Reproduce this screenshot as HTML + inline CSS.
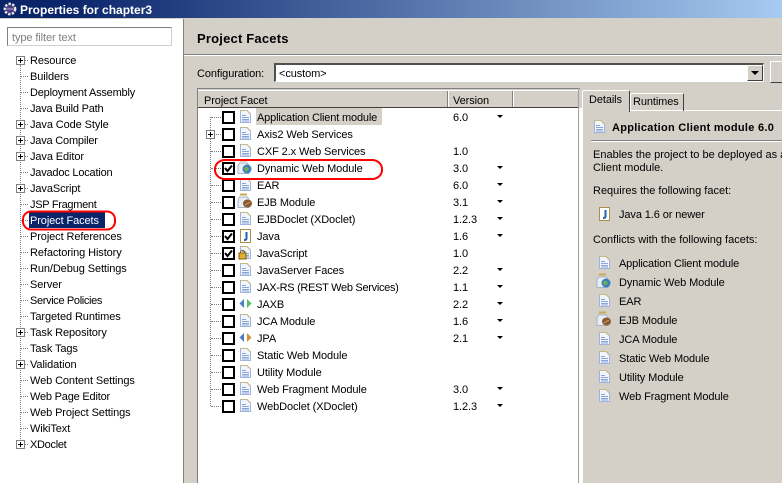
<!DOCTYPE html>
<html><head><meta charset="utf-8"><style>
html,body{margin:0;padding:0}
body{width:782px;height:483px;overflow:hidden;position:relative;background:#d4d0c8;font:11px/18px "Liberation Sans",sans-serif;color:#000;letter-spacing:-.1px}
div,span{position:absolute;white-space:nowrap}
svg{position:absolute;overflow:visible}
.t{left:30px}
.f{left:257px}
.v{left:453px}
.c{left:619px}
.hl{background:#808080;height:1px}
.h{height:0;width:8px;left:20px;border-top:1px dotted #808080}
.h2{height:0;width:10px;left:211px;border-top:1px dotted #808080}
.p{left:16px;width:7px;height:7px;border:1px solid #808080;background:#fff}
.p:before{content:"";position:absolute;left:1px;top:3px;width:5px;height:1px;background:#000}
.p:after{content:"";position:absolute;left:3px;top:1px;width:1px;height:5px;background:#000}
.b{left:222px;width:9px;height:9px;border:2px solid #000;background:#fff}
.a{left:497px;width:0;height:0;border-left:3px solid transparent;border-right:3px solid transparent;border-top:3px solid #000}
.w{letter-spacing:0}
</style></head><body>
<svg width="0" height="0" style="position:absolute"><defs>
<g id="pg"><path d="M.5.5H7L10.5 4V12.5H.5Z" fill="#f2f5fb" stroke="#9fb4dc"/><path d="M.5.5H7L10.5 4" fill="none" stroke="#c8b880"/><path d="M2 5.5H6M2 7.5H9M2 9.5H9M2 11H9" stroke="#86a4d8"/></g>
<g id="jar"><path d="M2 .5H9" stroke="#c8a850" stroke-width="2"/><path d="M1.5 3H9.5L11 6V13.5H0V6Z" fill="#e8eef6" stroke="#a8b4c8"/></g>
</defs></svg>

<!-- title bar -->
<div style="left:0;top:0;width:782px;height:18px;background:linear-gradient(90deg,#0a246a 0%,#0a246a 8%,#a6caf0 100%)"></div>
<svg style="left:2px;top:1px" width="16" height="16"><circle cx="8" cy="8" r="5.2" fill="#4a3f80" stroke="#e8e8e8" stroke-width="2.4" stroke-dasharray="2.4 1.4"/><path d="M4.5 8H11.5" stroke="#b0a8d0"/></svg>
<div class="w" style="left:20px;top:1px;color:#fff;font-weight:bold;font-size:12px">Properties for chapter3</div>

<!-- left panel -->
<div style="left:0;top:19px;width:183px;height:464px;background:#fff"></div>
<div style="left:183px;top:19px;width:1px;height:464px;background:#808080"></div>
<div style="left:7px;top:27px;width:163px;height:17px;background:#fff;border:1px solid;border-color:#808080 #d4d0c8 #d4d0c8 #808080"></div>
<div style="left:12px;top:29px;color:#808080">type filter text</div>
<div style="left:20px;top:65px;width:0;height:380px;border-left:1px dotted #808080"></div>
<div class="h" style="top:60px"></div><div class="h" style="top:76px"></div><div class="h" style="top:92px"></div><div class="h" style="top:108px"></div><div class="h" style="top:124px"></div><div class="h" style="top:140px"></div><div class="h" style="top:156px"></div><div class="h" style="top:172px"></div><div class="h" style="top:188px"></div><div class="h" style="top:204px"></div><div class="h" style="top:220px"></div><div class="h" style="top:236px"></div><div class="h" style="top:252px"></div><div class="h" style="top:268px"></div><div class="h" style="top:284px"></div><div class="h" style="top:300px"></div><div class="h" style="top:316px"></div><div class="h" style="top:332px"></div><div class="h" style="top:348px"></div><div class="h" style="top:364px"></div><div class="h" style="top:380px"></div><div class="h" style="top:396px"></div><div class="h" style="top:412px"></div><div class="h" style="top:428px"></div><div class="h" style="top:444px"></div>
<div class="p" style="top:56px"></div><div class="p" style="top:120px"></div><div class="p" style="top:136px"></div><div class="p" style="top:152px"></div><div class="p" style="top:184px"></div><div class="p" style="top:328px"></div><div class="p" style="top:360px"></div><div class="p" style="top:440px"></div>
<div style="left:29px;top:212px;width:76px;height:16px;background:#0a246a"></div>
<div class="t" style="top:52px">Resource</div>
<div class="t" style="top:68px">Builders</div>
<div class="t" style="top:84px;letter-spacing:-.2px">Deployment Assembly</div>
<div class="t" style="top:100px;letter-spacing:-.2px">Java Build Path</div>
<div class="t" style="top:116px">Java Code Style</div>
<div class="t" style="top:132px;letter-spacing:-.2px">Java Compiler</div>
<div class="t" style="top:148px">Java Editor</div>
<div class="t" style="top:164px;letter-spacing:-.2px">Javadoc Location</div>
<div class="t" style="top:180px">JavaScript</div>
<div class="t" style="top:196px;letter-spacing:-.3px">JSP Fragment</div>
<div class="t" style="top:212px;color:#fff">Project Facets</div>
<div class="t" style="top:228px">Project References</div>
<div class="t" style="top:244px">Refactoring History</div>
<div class="t" style="top:260px">Run/Debug Settings</div>
<div class="t" style="top:276px">Server</div>
<div class="t" style="top:292px;letter-spacing:-.35px">Service Policies</div>
<div class="t" style="top:308px">Targeted Runtimes</div>
<div class="t" style="top:324px">Task Repository</div>
<div class="t" style="top:340px">Task Tags</div>
<div class="t" style="top:356px">Validation</div>
<div class="t" style="top:372px">Web Content Settings</div>
<div class="t" style="top:388px;letter-spacing:-.2px">Web Page Editor</div>
<div class="t" style="top:404px">Web Project Settings</div>
<div class="t" style="top:420px">WikiText</div>
<div class="t" style="top:436px;letter-spacing:-.3px">XDoclet</div>

<!-- header -->
<div style="left:197px;top:30px;font-weight:bold;font-size:13px;letter-spacing:.2px">Project Facets</div>
<div class="hl" style="left:184px;top:54px;width:598px"></div>
<div style="left:184px;top:55px;width:598px;height:1px;background:#fff"></div>
<div style="left:197px;top:65px">Configuration:</div>
<div style="left:274px;top:63px;width:487px;height:16px;background:#fff;border:2px solid;border-color:#505050 #fff #fff #505050;border-width:2px 1px 1px 2px"></div>
<div style="left:279px;top:65px">&lt;custom&gt;</div>
<div style="left:747px;top:65px;width:14px;height:14px;background:#d4d0c8;border:1px solid;border-color:#fff #404040 #404040 #fff"></div>
<div style="left:751px;top:71px;width:0;height:0;border-left:4px solid transparent;border-right:4px solid transparent;border-top:4px solid #000"></div>
<div style="left:770px;top:61px;width:14px;height:20px;background:#d4d0c8;border:1px solid;border-color:#fff #404040 #404040 #fff"></div>

<!-- table -->
<div style="left:198px;top:90px;width:380px;height:393px;background:#fff"></div>
<div style="left:197px;top:88px;width:383px;height:1px;background:#808080"></div>
<div style="left:197px;top:88px;width:1px;height:395px;background:#808080"></div>
<div style="left:578px;top:88px;width:1px;height:395px;background:#a0a0a0"></div>
<div style="left:579px;top:108px;width:3px;height:375px;background:#fff"></div>
<div style="left:198px;top:90px;width:380px;height:17px;background:#d4d0c8;border-top:1px solid #fff"></div>
<div style="left:198px;top:107px;width:380px;height:1px;background:#404040"></div>
<div style="left:447px;top:91px;width:1px;height:16px;background:#808080"></div>
<div style="left:448px;top:91px;width:1px;height:16px;background:#fff"></div>
<div style="left:512px;top:91px;width:1px;height:16px;background:#808080"></div>
<div style="left:513px;top:91px;width:1px;height:16px;background:#fff"></div>
<div style="left:204px;top:92px">Project Facet</div>
<div style="left:453px;top:92px">Version</div>
<div style="left:256px;top:108px;width:126px;height:17px;background:#d4d0c8"></div>

<div style="left:210px;top:117px;width:0;height:289px;border-left:1px dotted #808080"></div>
<div class="h2" style="top:117px"></div><div class="h2" style="top:134px"></div><div class="h2" style="top:151px"></div><div class="h2" style="top:168px"></div><div class="h2" style="top:185px"></div><div class="h2" style="top:202px"></div><div class="h2" style="top:219px"></div><div class="h2" style="top:236px"></div><div class="h2" style="top:253px"></div><div class="h2" style="top:270px"></div><div class="h2" style="top:287px"></div><div class="h2" style="top:304px"></div><div class="h2" style="top:321px"></div><div class="h2" style="top:338px"></div><div class="h2" style="top:355px"></div><div class="h2" style="top:372px"></div><div class="h2" style="top:389px"></div><div class="h2" style="top:406px"></div>
<div class="p" style="left:206px;top:130px"></div>

<div class="b" style="top:111px"></div><div class="b" style="top:128px"></div><div class="b" style="top:145px"></div><div class="b" style="top:162px"></div><div class="b" style="top:179px"></div><div class="b" style="top:196px"></div><div class="b" style="top:213px"></div><div class="b" style="top:230px"></div><div class="b" style="top:247px"></div><div class="b" style="top:264px"></div><div class="b" style="top:281px"></div><div class="b" style="top:298px"></div><div class="b" style="top:315px"></div><div class="b" style="top:332px"></div><div class="b" style="top:349px"></div><div class="b" style="top:366px"></div><div class="b" style="top:383px"></div><div class="b" style="top:400px"></div>
<svg style="left:224px;top:164px" width="9" height="9"><path d="M1 4L3.5 7L8 1.5" fill="none" stroke="#000" stroke-width="2"/></svg>
<svg style="left:224px;top:232px" width="9" height="9"><path d="M1 4L3.5 7L8 1.5" fill="none" stroke="#000" stroke-width="2"/></svg>
<svg style="left:224px;top:249px" width="9" height="9"><path d="M1 4L3.5 7L8 1.5" fill="none" stroke="#000" stroke-width="2"/></svg>

<!-- facet icons -->
<svg style="left:240px;top:110px" width="11" height="14"><use href="#pg"/></svg>
<svg style="left:240px;top:127px" width="11" height="14"><use href="#pg"/></svg>
<svg style="left:240px;top:144px" width="11" height="14"><use href="#pg"/></svg>
<svg style="left:238px;top:160px" width="15" height="14"><use href="#jar"/><circle cx="9" cy="9" r="4.5" fill="#3a7fc0"/><path d="M6 8Q9 5 11 9Q9 12 7 11Z" fill="#70b050"/></svg>
<svg style="left:240px;top:178px" width="11" height="14"><use href="#pg"/></svg>
<svg style="left:238px;top:194px" width="15" height="14"><use href="#jar"/><ellipse cx="9.5" cy="9.5" rx="4.5" ry="4" fill="#8a5a30"/><path d="M7 11L12 8" stroke="#d0a070"/></svg>
<svg style="left:240px;top:212px" width="11" height="14"><use href="#pg"/></svg>
<svg style="left:240px;top:229px" width="11" height="14"><path d="M.5.5H10.5V13.5H.5Z" fill="#fff" stroke="#a89048"/><path d="M6.5 3V9.5Q6.5 11 4 11" fill="none" stroke="#2060b0" stroke-width="2"/></svg>
<svg style="left:240px;top:246px" width="11" height="14"><use href="#pg"/><rect x="-1" y="7" width="7" height="6" fill="#e0b030" stroke="#806010"/><path d="M.5 7V5.5Q2.5 3 4.5 5.5V7" fill="none" stroke="#806010"/></svg>
<svg style="left:240px;top:263px" width="11" height="14"><use href="#pg"/></svg>
<svg style="left:240px;top:280px" width="11" height="14"><use href="#pg"/></svg>
<svg style="left:239px;top:298px" width="14" height="12"><path d="M5 1V10L.5 5.5Z" fill="#4a80c0"/><path d="M8 1V10L12.5 5.5Z" fill="#50c060"/></svg>
<svg style="left:240px;top:314px" width="11" height="14"><use href="#pg"/></svg>
<svg style="left:239px;top:332px" width="14" height="12"><path d="M5 1V10L.5 5.5Z" fill="#4a80c0"/><path d="M8 1V10L12.5 5.5Z" fill="#d09030"/></svg>
<svg style="left:240px;top:348px" width="11" height="14"><use href="#pg"/></svg>
<svg style="left:240px;top:365px" width="11" height="14"><use href="#pg"/></svg>
<svg style="left:240px;top:382px" width="11" height="14"><use href="#pg"/></svg>
<svg style="left:240px;top:399px" width="11" height="14"><use href="#pg"/></svg>

<div class="f" style="top:109px;letter-spacing:-.16px">Application Client module</div>
<div class="f" style="top:126px">Axis2 Web Services</div>
<div class="f" style="top:143px">CXF 2.x Web Services</div>
<div class="f" style="top:160px">Dynamic Web Module</div>
<div class="f" style="top:177px">EAR</div>
<div class="f" style="top:194px">EJB Module</div>
<div class="f" style="top:211px">EJBDoclet (XDoclet)</div>
<div class="f" style="top:228px">Java</div>
<div class="f" style="top:245px">JavaScript</div>
<div class="f" style="top:262px">JavaServer Faces</div>
<div class="f" style="top:279px;letter-spacing:-.3px">JAX-RS (REST Web Services)</div>
<div class="f" style="top:296px">JAXB</div>
<div class="f" style="top:313px">JCA Module</div>
<div class="f" style="top:330px">JPA</div>
<div class="f" style="top:347px">Static Web Module</div>
<div class="f" style="top:364px">Utility Module</div>
<div class="f" style="top:381px">Web Fragment Module</div>
<div class="f" style="top:398px">WebDoclet (XDoclet)</div>

<div class="v" style="top:109px">6.0</div>
<div class="v" style="top:143px">1.0</div>
<div class="v" style="top:160px">3.0</div>
<div class="v" style="top:177px">6.0</div>
<div class="v" style="top:194px">3.1</div>
<div class="v" style="top:211px">1.2.3</div>
<div class="v" style="top:228px">1.6</div>
<div class="v" style="top:245px">1.0</div>
<div class="v" style="top:262px">2.2</div>
<div class="v" style="top:279px">1.1</div>
<div class="v" style="top:296px">2.2</div>
<div class="v" style="top:313px">1.6</div>
<div class="v" style="top:330px">2.1</div>
<div class="v" style="top:381px">3.0</div>
<div class="v" style="top:398px">1.2.3</div>
<div class="a" style="top:115px"></div><div class="a" style="top:166px"></div><div class="a" style="top:183px"></div><div class="a" style="top:200px"></div><div class="a" style="top:217px"></div><div class="a" style="top:234px"></div><div class="a" style="top:268px"></div><div class="a" style="top:285px"></div><div class="a" style="top:302px"></div><div class="a" style="top:319px"></div><div class="a" style="top:336px"></div><div class="a" style="top:387px"></div><div class="a" style="top:404px"></div>

<!-- details panel -->
<div style="left:582px;top:110px;width:1px;height:373px;background:#fff"></div>
<div style="left:582px;top:110px;width:200px;height:1px;background:#fff"></div>
<div style="left:630px;top:93px;width:52px;height:17px;border:1px solid;border-color:#fff #404040 transparent #fff;border-bottom:0;border-radius:2px 2px 0 0"></div>
<div style="left:582px;top:90px;width:46px;height:21px;background:#d4d0c8;border:1px solid;border-color:#fff #404040 transparent #fff;border-bottom:0;border-radius:2px 2px 0 0"></div>
<div style="left:589px;top:91px">Details</div>
<div style="left:633px;top:93px">Runtimes</div>
<svg style="left:594px;top:120px" width="11" height="14"><use href="#pg"/></svg>
<div style="left:612px;top:119px;font-weight:bold;letter-spacing:.28px">Application Client module 6.0</div>
<div class="hl" style="left:591px;top:140px;width:191px"></div>
<div style="left:591px;top:141px;width:191px;height:1px;background:#fff"></div>
<div class="w" style="left:593px;top:146px">Enables the project to be deployed as a</div>
<div class="w" style="left:593px;top:159px">Client module.</div>
<div class="w" style="left:593px;top:182px">Requires the following facet:</div>
<svg style="left:599px;top:207px" width="11" height="14"><path d="M.5.5H10.5V13.5H.5Z" fill="#fff" stroke="#a89048"/><path d="M6.5 3V9.5Q6.5 11 4 11" fill="none" stroke="#2060b0" stroke-width="2"/></svg>
<div style="left:619px;top:206px">Java 1.6 or newer</div>
<div class="w" style="left:593px;top:231px">Conflicts with the following facets:</div>
<svg style="left:599px;top:256px" width="11" height="14"><use href="#pg"/></svg>
<svg style="left:597px;top:274px" width="15" height="14"><use href="#jar"/><circle cx="9" cy="9" r="4.5" fill="#3a7fc0"/><path d="M6 8Q9 5 11 9Q9 12 7 11Z" fill="#70b050"/></svg>
<svg style="left:599px;top:294px" width="11" height="14"><use href="#pg"/></svg>
<svg style="left:597px;top:312px" width="15" height="14"><use href="#jar"/><ellipse cx="9.5" cy="9.5" rx="4.5" ry="4" fill="#8a5a30"/><path d="M7 11L12 8" stroke="#d0a070"/></svg>
<svg style="left:599px;top:332px" width="11" height="14"><use href="#pg"/></svg>
<svg style="left:599px;top:351px" width="11" height="14"><use href="#pg"/></svg>
<svg style="left:599px;top:370px" width="11" height="14"><use href="#pg"/></svg>
<svg style="left:599px;top:389px" width="11" height="14"><use href="#pg"/></svg>
<div class="c" style="top:255px;letter-spacing:-.16px">Application Client module</div>
<div class="c" style="top:274px">Dynamic Web Module</div>
<div class="c" style="top:293px">EAR</div>
<div class="c" style="top:312px">EJB Module</div>
<div class="c" style="top:331px">JCA Module</div>
<div class="c" style="top:350px">Static Web Module</div>
<div class="c" style="top:369px">Utility Module</div>
<div class="c" style="top:388px">Web Fragment Module</div>

<!-- red annotations -->
<svg style="left:0;top:0" width="782" height="483"><rect x="215" y="160" width="167" height="19" rx="10" ry="9" fill="none" stroke="#f00" stroke-width="2"/><rect x="23" y="211.5" width="92" height="18" rx="8" ry="8" fill="none" stroke="#f00" stroke-width="2"/></svg>
</body></html>
